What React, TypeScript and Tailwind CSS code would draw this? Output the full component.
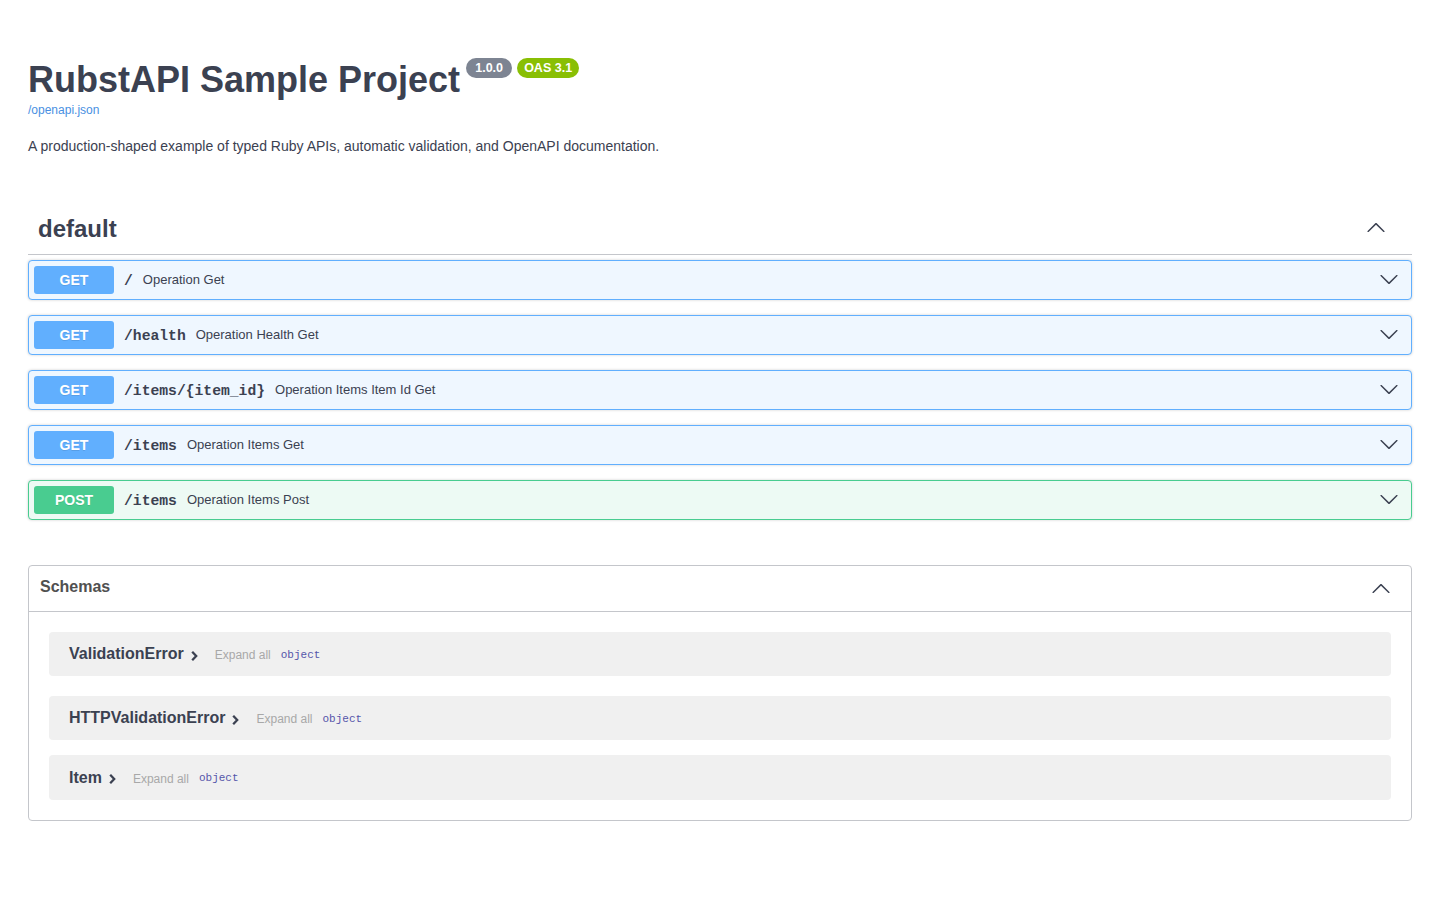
import React from 'react';

// lista de operaciones del spec
const ops = [
  { method: 'GET', path: '/', summary: 'Operation Get' },
  { method: 'GET', path: '/health', summary: 'Operation Health Get' },
  { method: 'GET', path: '/items/{item_id}', summary: 'Operation Items Item Id Get' },
  { method: 'GET', path: '/items', summary: 'Operation Items Get' },
  { method: 'POST', path: '/items', summary: 'Operation Items Post' },
];

const schemas = [
  { name: 'ValidationError', box: 'h-[44px] mb-[20px]' },
  { name: 'HTTPValidationError', box: 'h-[44px] mb-[15px]' },
  { name: 'Item', box: 'h-[45px]' },
];

function ArrowDown() {
  return (
    <svg width="20" height="20" viewBox="0 0 20 20" className="shrink-0">
      <path
        fill="#3b4151"
        d="M17.418 6.109c.272-.268.709-.268.979 0s.271.701 0 .969l-7.908 7.83c-.27.268-.707.268-.979 0l-7.908-7.83c-.27-.268-.27-.701 0-.969.271-.268.709-.268.979 0L10 13.25l7.418-7.141z"
      />
    </svg>
  );
}

function ArrowUp() {
  return (
    <svg width="20" height="20" viewBox="0 0 20 20" className="shrink-0">
      <path
        fill="#3b4151"
        d="M2.582 13.891c-.272.268-.709.268-.979 0s-.271-.701 0-.969l7.908-7.83c.27-.268.707-.268.979 0l7.908 7.83c.27.268.27.701 0 .969-.271.268-.709.268-.979 0L10 6.75l-7.418 7.141z"
      />
    </svg>
  );
}

function ModelArrow() {
  return (
    <svg width="9" height="12" viewBox="0 0 9 12" className="shrink-0 mt-[3px]">
      <path d="M2.2 1.8l4 4.2-4 4.2" fill="none" stroke="#3b4151" strokeWidth="2.3" />
    </svg>
  );
}

export default function App() {
  return (
    <div className="min-h-screen bg-white px-[28px] pt-[58px] pb-[60px] font-['Liberation_Sans',Arial,sans-serif] text-[#3b4151]">
      {/* info */}
      <div className="flex items-start">
        <h2 className="mt-[4px] text-[36px] font-bold leading-[36px]">RubstAPI Sample Project</h2>
        <span className="ml-[6px] flex h-[20px] w-[46px] items-center justify-center rounded-full bg-[#7d8492] text-[12.5px] font-bold text-white">
          1.0.0
        </span>
        <span className="ml-[5px] flex h-[20px] w-[62px] items-center justify-center rounded-full bg-[#89bf04] text-[12.5px] font-bold text-white">
          OAS 3.1
        </span>
      </div>
      <a className="mt-[4px] block text-[12px] leading-[16px] text-[#4990e2]">/openapi.json</a>
      <p className="mt-[18px] text-[14px] leading-[20px]">
        A production-shaped example of typed Ruby APIs, automatic validation, and OpenAPI documentation.
      </p>

      {/* tag */}
      <div className="mt-[46px]">
        <h3 className="flex h-[53px] items-center justify-between border-b border-[#c4c6cb] pl-[10px] pr-[26px] text-[24px] font-bold leading-[32px]">
          <span className="mt-[2px]">default</span>
          <ArrowUp />
        </h3>
        <div className="mt-[5px] flex flex-col gap-[15px]">
          {ops.map((op, i) => {
            const post = op.method === 'POST';
            return (
              <div
                key={i}
                className={
                  post
                    ? 'flex items-center rounded-[4px] border border-[#49cc90] bg-[#edfaf4] p-[5px] shadow-[0_0_3px_rgba(0,0,0,0.19)]'
                    : 'flex items-center rounded-[4px] border border-[#61affe] bg-[#eff7ff] p-[5px] shadow-[0_0_3px_rgba(0,0,0,0.19)]'
                }
              >
                <span
                  className={
                    post
                      ? 'flex h-[28px] w-[80px] items-center justify-center rounded-[3px] bg-[#49cc90] text-[14px] font-bold text-white [text-shadow:0_1px_0_rgba(0,0,0,0.1)]'
                      : 'flex h-[28px] w-[80px] items-center justify-center rounded-[3px] bg-[#61affe] text-[14px] font-bold text-white [text-shadow:0_1px_0_rgba(0,0,0,0.1)]'
                  }
                >
                  {op.method}
                </span>
                <span className="mt-[2px] px-[10px] font-['Liberation_Mono',monospace] text-[14.7px] font-bold">{op.path}</span>
                <span className="flex-1 text-[13px]">{op.summary}</span>
                <span className="mr-[7px] -mt-[3px]">
                  <ArrowDown />
                </span>
              </div>
            );
          })}
        </div>
      </div>

      {/* schemas */}
      <section className="mt-[45px] rounded-[4px] border border-[#c4c6cb]">
        <h4 className="flex h-[46px] items-center justify-between border-b border-[#c4c6cb] pl-[11px] pr-[20px] text-[16px] font-bold text-[#505050]">
          <span className="-mt-[3px]">Schemas</span>
          <ArrowUp />
        </h4>
        <div className="pt-[20px] pb-[20px]">
          {schemas.map((s) => (
            <div key={s.name} className={'mx-[20px] flex items-center rounded-[4px] bg-[#f0f0f0] px-[20px] ' + s.box}>
              <span className="text-[16px] font-bold text-[#3b4151]">{s.name}</span>
              <span className="ml-[6px]">
                <ModelArrow />
              </span>
              <span className="ml-[16px] mt-[2px] text-[12px] text-[#a8a8a8]">Expand all</span>
              <span className="ml-[10px] mt-[2px] font-['Liberation_Mono',monospace] text-[11px] text-[#55a]">object</span>
            </div>
          ))}
        </div>
      </section>
    </div>
  );
}
